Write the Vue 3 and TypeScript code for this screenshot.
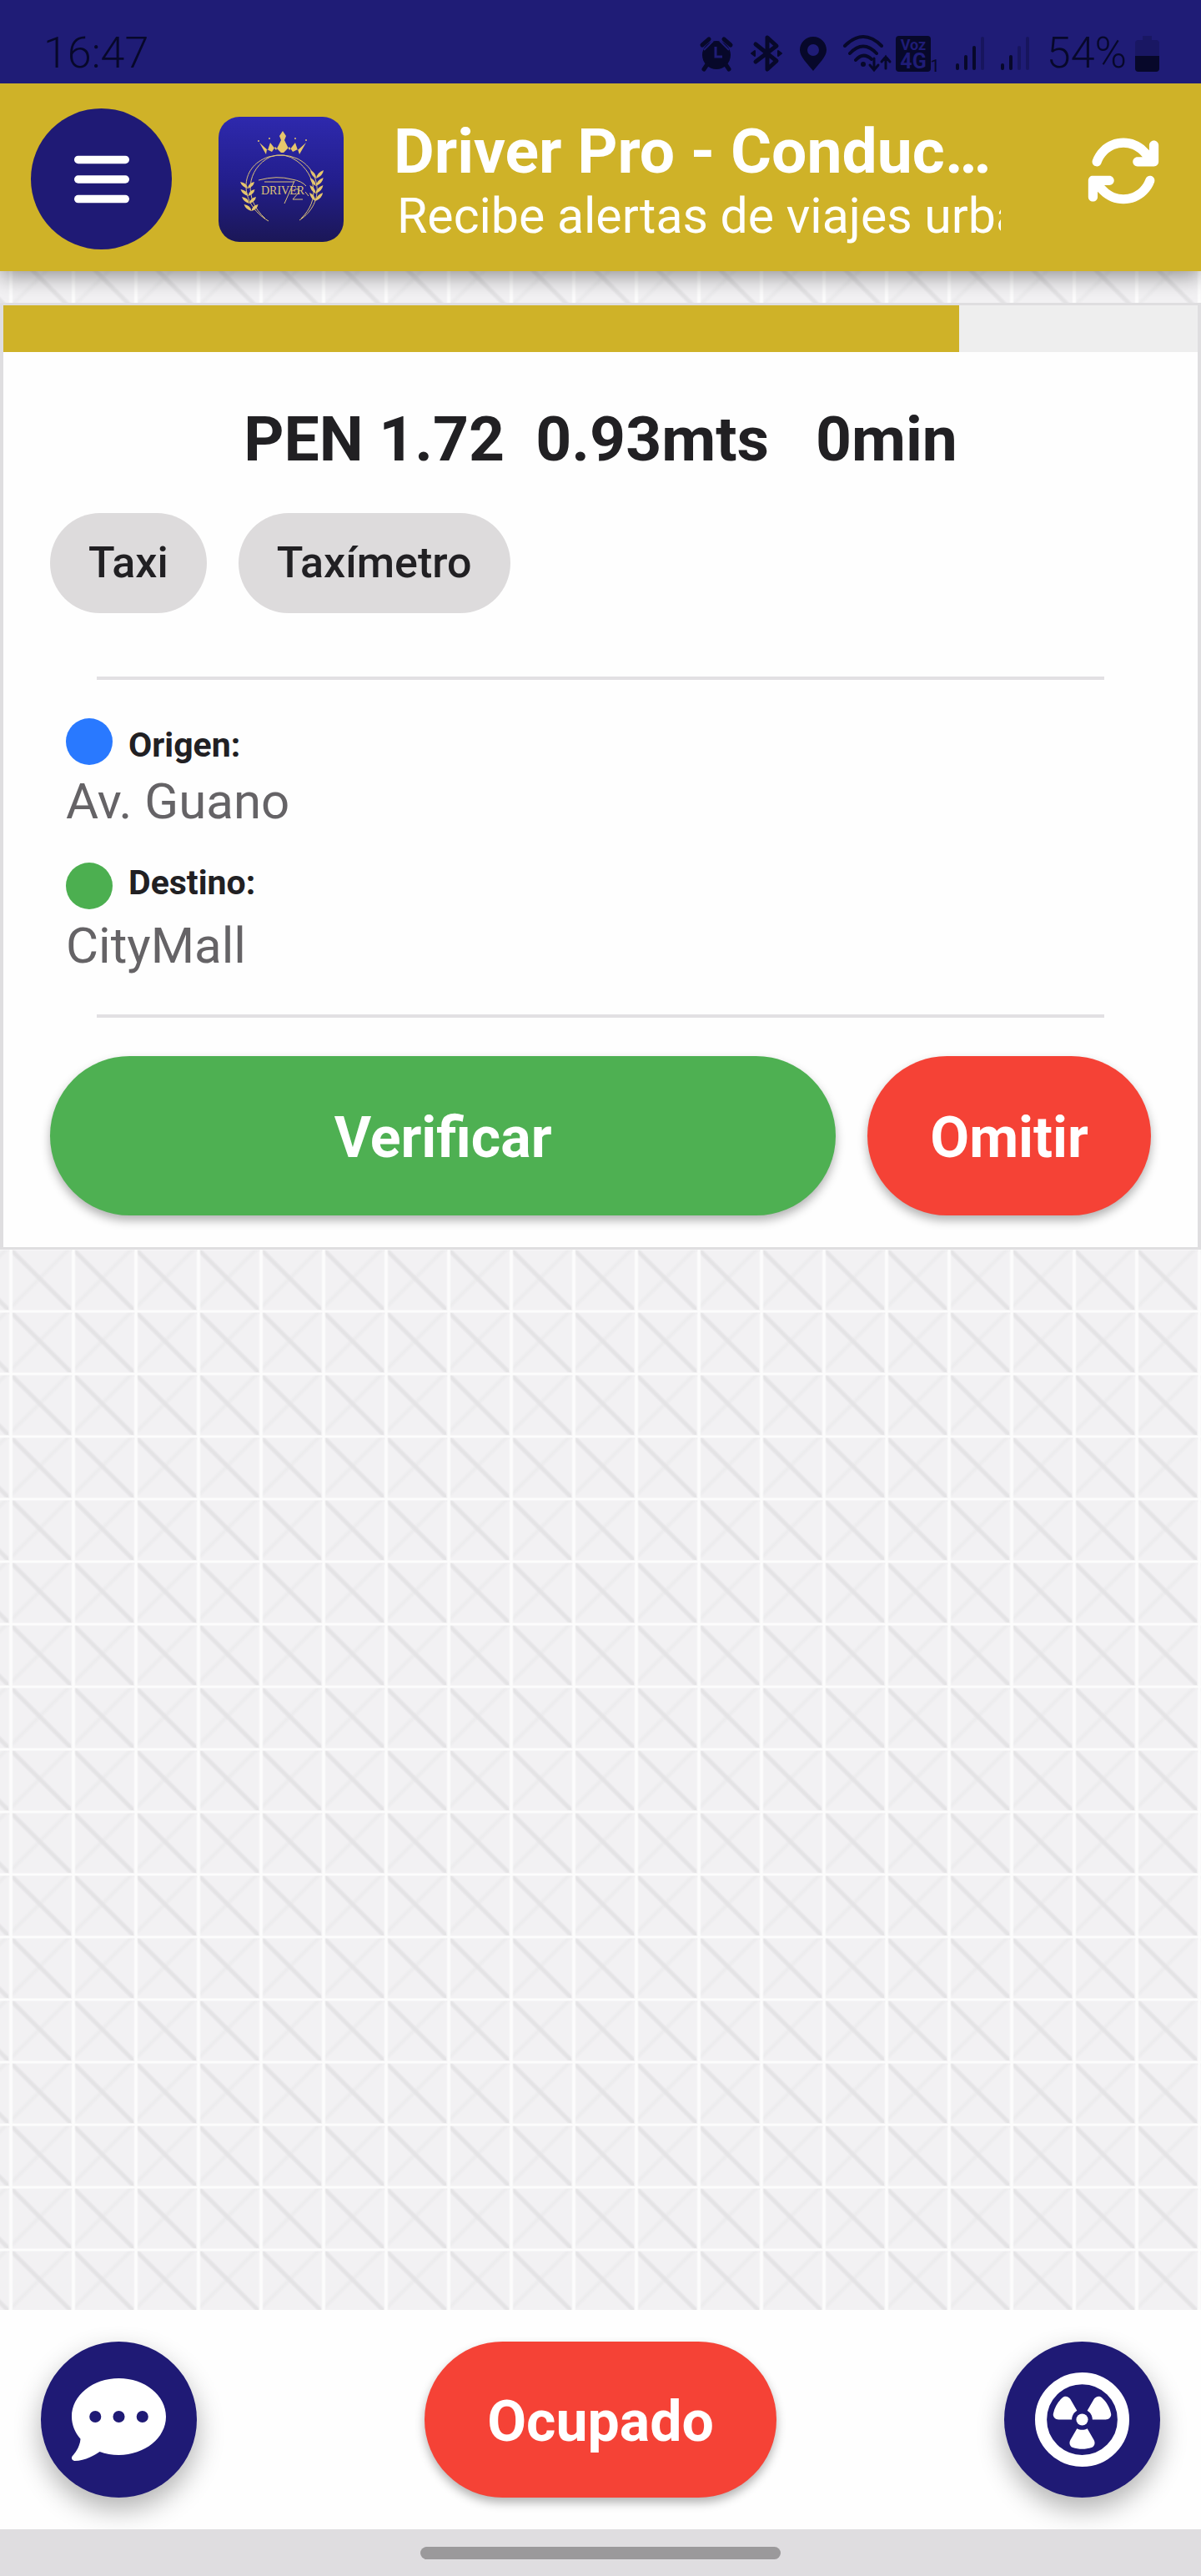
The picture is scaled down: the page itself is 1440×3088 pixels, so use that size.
<script setup lang="ts">
import { ref } from 'vue'

interface Stop {
  kind: 'origin' | 'destination'
  label: string
  place: string
}

const fare = ['PEN 1.72', '0.93mts', '0min']
const tags = ['Taxi', 'Taxímetro']
const stops: Stop[] = [
  { kind: 'origin', label: 'Origen:', place: 'Av. Guano' },
  { kind: 'destination', label: 'Destino:', place: 'CityMall' },
]
const remaining = ref(80)
const leaves = [0, 1, 2, 3]
</script>

<template>
  <div class="app">
    <div class="status">
      <span class="clock">16:47</span>
      <div class="status-icons">
        <svg width="40" height="44" viewBox="0 0 40 44" fill="currentColor">
          <circle cx="20" cy="24" r="17" />
          <path d="M9 35l-4 6M31 35l4 6M3 12l8-7M37 12l-8-7" stroke="currentColor" stroke-width="5" stroke-linecap="round" />
          <path d="M5 18l11-11M35 18l-11-11" fill="none" stroke="#1f1c76" stroke-width="2" />
          <path d="M19 14v12h8" fill="none" stroke="#1f1c76" stroke-width="3" />
        </svg>
        <svg width="40" height="44" viewBox="0 0 40 44" fill="none" stroke="currentColor" stroke-width="5" stroke-linejoin="round" stroke-linecap="round">
          <path d="M7 11l25 20-11 10V3l11 10L7 32" />
          <path d="M2 22l4-3v6zM38 22l-4-3v6z" stroke-width="2" fill="currentColor" />
        </svg>
        <svg width="32" height="44" viewBox="0 0 32 44" fill="currentColor">
          <path fill-rule="evenodd" d="M16 2C7 2 0 9 0 18c0 8 9 16 16 25 7-9 16-17 16-25C32 9 25 2 16 2zm0 9a7 7 0 1 1 0 14 7 7 0 0 1 0-14z" />
        </svg>
        <div class="status-group tight">
          <svg width="58" height="44" viewBox="0 0 58 44" fill="none" stroke="currentColor" stroke-width="4" stroke-linecap="round">
            <path d="M2 13Q24-9 46 13M8 22Q24 5 40 22M15 30Q24 20 34 29" />
            <circle cx="24" cy="35" r="3" fill="currentColor" stroke="none" />
            <path d="M37 28v13M32 36l5 6 5-6M51 40V26M46 32l5-6 5 6" stroke-width="3" />
          </svg>
          <svg width="51" height="44" viewBox="0 0 51 44" fill="currentColor">
            <rect width="42" height="43" rx="4" y="1" />
            <text x="21" y="18" class="badge-voz">Voz</text>
            <text x="21" y="40" class="badge-net">4G</text>
            <text x="47" y="44" class="badge-sim">1</text>
          </svg>
        </div>
        <div class="status-group">
          <svg width="36" height="44" viewBox="0 0 36 44" stroke="currentColor" stroke-width="4" stroke-linecap="round">
            <path d="M3 36v4M13 26v14M23 15v25" />
            <path d="M33 4v36" opacity=".3" />
          </svg>
          <svg width="36" height="44" viewBox="0 0 36 44" stroke="currentColor" stroke-width="4" stroke-linecap="round">
            <path d="M3 36v4M13 26v14" />
            <path d="M23 15v25M33 4v36" opacity=".3" />
          </svg>
        </div>
        <div class="status-group near">
          <span class="battery-text">54%</span>
          <svg width="29" height="44" viewBox="0 0 29 44" fill="currentColor">
            <path d="M9 1h11v5h5q4 0 4 4v15H0V10q0-4 4-4h5z" opacity=".25" />
            <path d="M0 25h29v15q0 4-4 4H4q-4 0-4-4z" />
          </svg>
        </div>
      </div>
    </div>

    <header class="header">
      <button class="round menu" type="button" aria-label="Menú">
        <svg width="66" height="76" viewBox="0 0 448 512" fill="currentColor">
          <rect y="64" width="448" height="64" rx="32" />
          <rect y="224" width="448" height="64" rx="32" />
          <rect y="384" width="448" height="64" rx="32" />
        </svg>
      </button>
      <svg class="logo" viewBox="0 0 150 150" role="img" aria-label="Driver">
        <defs>
          <linearGradient id="logo-bg" x1="0" y1="0" x2="0" y2="1">
            <stop offset="0" stop-color="#2e29ad" />
            <stop offset=".5" stop-color="#231e8d" />
            <stop offset="1" stop-color="#1b1757" />
          </linearGradient>
        </defs>
        <rect width="150" height="150" rx="25" fill="url(#logo-bg)" />
        <g fill="#e6c66c">
          <path d="M57 45L49 31l10 9 3-9 7 9 6-12-2-5 4-6 4 6-2 5 6 12 7-9 3 9 10-9-8 14-2-6-6 3-4-6-7 7h-3l-7-7-4 6-6-3z" />
          <circle cx="48" cy="29" r="1" /><circle cx="61" cy="26" r="1" /><circle cx="92" cy="26" r="1" /><circle cx="105" cy="28" r="1" />
          <g v-for="i in leaves" :key="i">
            <path d="M0 0q-7-2-9-8 8 1 9 8zq7-2 8-8-7 1-8 8z" :transform="`translate(${35 + i * i * 0.5} ${86 + i * 9})`" />
            <path d="M0 0q-6-3-7-10 7 3 7 10zq8-3 9-10-8 3-9 10z" :transform="`translate(${117 - i * 0.3} ${74 + i * 9})`" />
          </g>
        </g>
        <g fill="none" stroke="#dcc27a" stroke-width="1">
          <path d="M60 125C24 104 24 60 60 48q18-5 34 2c28 13 35 53 3 74" />
          <path d="M56 122C29 98 34 62 62 48q18-6 32 5c23 17 28 47 5 69" />
          <path d="M48 76q22-6 40-1 12 2 17 8M55 78h36M91 77L79 104M90 88q8-4 6 3l-7 8h12M104 90l4 5" />
        </g>
        <text x="51" y="93" class="logo-text">DRIVER</text>
      </svg>
      <div class="titles">
        <h1>Driver Pro - Conductor</h1>
        <p>Recibe alertas de viajes urbanos</p>
      </div>
      <button class="refresh" type="button" aria-label="Actualizar">
        <svg width="90" height="90" viewBox="0 0 512 512" fill="currentColor">
          <path d="M105.1 202.6c7.7-21.8 20.2-42.3 37.8-59.8c62.5-62.5 163.8-62.5 226.3 0L386.3 160H352c-17.7 0-32 14.3-32 32s14.3 32 32 32H463.5h.4c17.7 0 32-14.3 32-32V80c0-17.7-14.3-32-32-32s-32 14.3-32 32v35.2L414.4 97.6c-87.5-87.5-229.3-87.5-316.8 0C73.2 122 55.6 150.7 44.8 181.4c-5.9 16.7 2.9 34.9 19.5 40.8s34.9-2.9 40.8-19.5zM39 289.3c-5 1.5-9.8 4.2-13.7 8.2c-4 4-6.7 8.8-8.1 14c-.3 1.2-.6 2.5-.8 3.8c-.3 1.7-.4 3.4-.4 5.1V432c0 17.7 14.3 32 32 32s32-14.3 32-32V396.9l17.6 17.5c87.5 87.4 229.3 87.4 316.7 0c24.4-24.4 42.1-53.1 52.9-83.7c5.9-16.7-2.9-34.9-19.5-40.8s-34.9 2.9-40.8 19.5c-7.7 21.8-20.2 42.3-37.8 59.8c-62.5 62.5-163.8 62.5-226.3 0l-.1-.1L125.6 352H160c17.7 0 32-14.3 32-32s-14.3-32-32-32H48.4c-1.6 0-3.2 .1-4.8 .3s-3.1 .5-4.6 1z" />
        </svg>
      </button>
    </header>

    <main class="main">
      <article class="card">
        <div class="track">
          <div class="fill" :style="{ width: remaining + '%' }"></div>
        </div>
        <div class="body">
          <h2 class="fare">{{ fare[0] }}&nbsp; {{ fare[1] }}&nbsp;&nbsp; {{ fare[2] }}</h2>
          <div class="tags">
            <span v-for="tag in tags" :key="tag" class="tag">{{ tag }}</span>
          </div>
          <hr class="rule" />
          <dl class="stops">
            <div v-for="stop in stops" :key="stop.kind" class="stop" :class="stop.kind">
              <dt><i class="dot"></i>{{ stop.label }}</dt>
              <dd>{{ stop.place }}</dd>
            </div>
          </dl>
          <hr class="rule" />
          <div class="actions">
            <button class="pill verify" type="button">Verificar</button>
            <button class="pill skip" type="button">Omitir</button>
          </div>
        </div>
      </article>
    </main>

    <footer class="footer">
      <button class="round fab" type="button" aria-label="Mensajes">
        <svg width="113" height="113" viewBox="0 0 512 512" fill="currentColor">
          <path fill-rule="evenodd" d="M256 448c141.4 0 256-93.1 256-208S397.4 32 256 32S0 125.1 0 240c0 45.1 17.7 86.8 47.7 120.9c-1.9 24.5-11.4 46.3-21.4 62.9c-5.5 9.2-11.1 16.6-15.2 21.6c-2.1 2.5-3.7 4.4-4.9 5.7l-1.6 1.7c-4.6 4.6-5.9 11.4-3.4 17.4c2.5 6 8.3 9.9 14.8 9.9c28.7 0 57.6-8.9 81.6-19.3c22.9-10 42.4-21.9 54.3-30.6c31.8 11.5 67 17.9 104.1 17.9zM128 208a32 32 0 1 1 0 64 32 32 0 1 1 0-64zm128 0a32 32 0 1 1 0 64 32 32 0 1 1 0-64zm128 0a32 32 0 1 1 0 64 32 32 0 1 1 0-64z" />
        </svg>
      </button>
      <button class="pill busy" type="button">Ocupado</button>
      <button class="round fab" type="button" aria-label="Alerta">
        <svg width="113" height="113" viewBox="0 0 512 512" fill="currentColor">
          <circle cx="256" cy="256" r="224" fill="none" stroke="currentColor" stroke-width="64" />
          <path d="M200 256c0-20.7 11.3-38.8 28-48.5l-36-62.3c-8.8-15.3-28.7-20.8-42-9c-25.6 22.6-43.8 53.3-50.9 88.1C95.7 241.5 110.3 256 128 256l72 0zm28 48.5l-36 62.4c-8.8 15.3-3.6 35.2 13.1 40.8c16 5.4 33.1 8.3 50.9 8.3s34.9-2.9 50.9-8.3c16.7-5.6 21.9-25.5 13.1-40.8l-36-62.4c-8.2 4.8-17.8 7.5-28 7.5s-19.8-2.7-28-7.5zM312 256l72 0c17.7 0 32.3-14.5 28.8-31.8c-7.1-34.8-25.3-65.5-50.9-88.1c-13.2-11.7-33.1-6.3-42 9l-36 62.3c16.7 9.7 28 27.8 28 48.5z" />
          <circle cx="256" cy="256" r="32" />
        </svg>
      </button>
    </footer>
    <div class="gesture"><span class="handle"></span></div>
  </div>
</template>

<style>
body {
  margin: 0;
}
</style>

<style scoped>
.app {
  display: flex;
  flex-direction: column;
  min-height: 100vh;
  font-family: Roboto, "Liberation Sans", sans-serif;
  color: #212023;
}

button {
  font: inherit;
  border: 0;
  padding: 0;
  cursor: pointer;
}

svg {
  display: block;
  flex: none;
  overflow: visible;
}

.status {
  position: relative;
  z-index: 2;
  display: flex;
  justify-content: space-between;
  align-items: center;
  box-sizing: border-box;
  height: 100px;
  padding: 28px 50px 0 52px;
  background: #1f1c76;
  color: #07082a;
}

.clock,
.battery-text {
  font-size: 52px;
  line-height: 60px;
}

.clock {
  font-weight: 300;
}

.status-icons {
  display: flex;
  align-items: center;
  gap: 20px;
}

.status-group {
  display: flex;
  align-items: center;
  gap: 18px;
}

.status-group.tight {
  gap: 5px;
}

.status-group.near {
  gap: 10px;
}

.battery-text {
  font-weight: 300;
}

.badge-voz,
.badge-net {
  fill: #1f1c76;
  font-weight: 700;
  text-anchor: middle;
}

.badge-voz {
  font-size: 18px;
}

.badge-net {
  font-size: 25px;
}

.badge-sim {
  font-size: 20px;
  text-anchor: middle;
}

.header {
  position: relative;
  z-index: 1;
  display: flex;
  align-items: center;
  padding: 30px 48px 26px 37px;
  background: #cfb228;
  color: #fff;
  box-shadow: 0 6px 24px rgba(0, 0, 0, 0.4);
}

.round {
  display: flex;
  align-items: center;
  justify-content: center;
  flex: none;
  border-radius: 50%;
  background: #1f1a75;
  color: #fff;
}

.menu {
  width: 169px;
  height: 169px;
}

.logo {
  width: 150px;
  height: 150px;
  margin: 0 60px 0 56px;
}

.logo-text {
  font-family: "Liberation Serif", serif;
  font-size: 14px;
  fill: #dcc27a;
}

.titles {
  flex: 1;
  min-width: 0;
  margin-right: 102px;
}

.titles h1,
.titles p {
  margin: 0;
  overflow: hidden;
  white-space: nowrap;
}

.titles h1 {
  font-size: 75px;
  line-height: 88px;
  font-weight: 700;
  text-overflow: ellipsis;
}

.titles p {
  padding-left: 4px;
  font-size: 59px;
  line-height: 68px;
}

.refresh {
  display: flex;
  align-items: center;
  align-self: flex-start;
  height: 150px;
  background: none;
  color: #fff;
}

.main {
  flex: 1;
  padding-top: 38px;
  background-color: #f2f1f3;
  background-image:
    linear-gradient(90deg, transparent, #fcfcfc 2px, #fcfcfc 4px, transparent 6px),
    linear-gradient(transparent, #fcfcfc 1px, #fcfcfc 3px, transparent 4px),
    linear-gradient(45deg, transparent calc(50% - 4px), #e4e3e5 calc(50% - 1px), #e4e3e5 calc(50% + 1px), transparent calc(50% + 4px)),
    linear-gradient(-45deg, transparent calc(50% - 4px), #ecebed 50%, transparent calc(50% + 4px));
  background-size: 75px 75px;
  background-position: 10px 45px;
}

.card {
  border: solid #dfdee0;
  border-width: 3px 4px;
  background: #fefefe;
}

.track {
  height: 56px;
  background: #eeeeee;
}

.fill {
  height: 100%;
  background: #cfb228;
}

.body {
  padding: 60px 56px 38px;
}

.fare {
  margin: 0 0 45px;
  font-size: 75px;
  line-height: 88px;
  font-weight: 700;
  text-align: center;
}

.tags {
  display: flex;
  gap: 38px;
  margin-bottom: 76px;
}

.tag {
  padding: 0 46px;
  border-radius: 60px;
  background: #dddbdc;
  font-size: 52px;
  line-height: 120px;
  font-weight: 500;
}

.rule {
  height: 4px;
  margin: 0 56px;
  border: 0;
  background: #e2e0e3;
}

.stops {
  display: flex;
  flex-direction: column;
  gap: 37px;
  margin: 46px 19px;
}

.stop dt {
  display: flex;
  gap: 19px;
  margin-bottom: 8px;
  font-size: 41px;
  line-height: 48px;
  font-weight: 700;
}

.origin dt {
  align-items: flex-end;
}

.destination dt {
  align-items: flex-start;
}

.dot {
  width: 56px;
  height: 56px;
  border-radius: 50%;
}

.origin .dot {
  background: #2979ff;
}

.destination .dot {
  background: #4caf50;
}

.stop dd {
  margin: 0;
  font-size: 60px;
  line-height: 72px;
  color: #656366;
}

.actions {
  display: flex;
  gap: 38px;
  margin-top: 46px;
}

.pill {
  height: 191px;
  padding: 4px 75px 0;
  border-radius: 96px;
  color: #fff;
  font-size: 68px;
  font-weight: 700;
  box-shadow: 0 6px 12px rgba(0, 0, 0, 0.3);
}

.verify {
  flex: 1;
  background: #4eb052;
}

.skip {
  background: #f54236;
}

.footer {
  display: flex;
  align-items: center;
  justify-content: space-between;
  padding: 38px 49px;
  background: #fefefe;
}

.fab {
  width: 187px;
  height: 187px;
  box-shadow: 0 14px 32px rgba(0, 0, 0, 0.3);
}

.busy {
  height: 187px;
  background: #f54236;
}

.gesture {
  display: flex;
  align-items: center;
  justify-content: center;
  position: relative;
  height: 56px;
  background: #dfdde0;
}

.handle {
  width: 30%;
  height: 15px;
  border-radius: 8px;
  background: #9b999b;
}
</style>
